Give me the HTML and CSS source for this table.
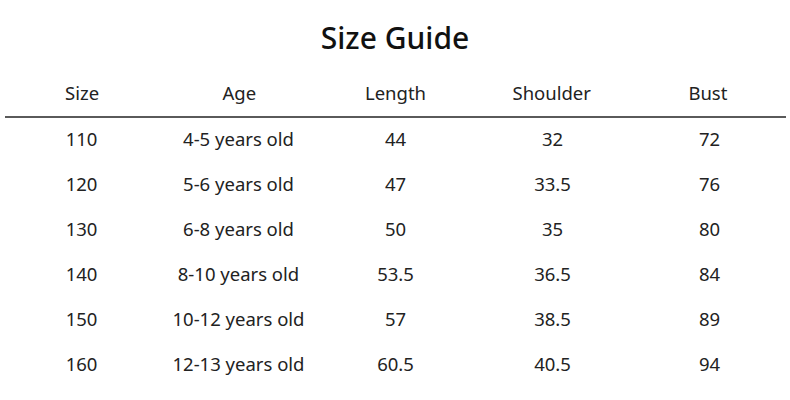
FILE: index.html
```html
<!DOCTYPE html>
<html>
<head>
<meta charset="utf-8">
<link rel="stylesheet" href="styles.css">
</head>
<body>
<div class="page">
  <h1 class="title">Size Guide</h1>
  <div class="table">
    <div class="row head">
      <div>Size</div><div>Age</div><div>Length</div><div>Shoulder</div><div>Bust</div>
    </div>
    <div class="row"><div>110</div><div>4-5 years old</div><div>44</div><div>32</div><div>72</div></div>
    <div class="row"><div>120</div><div>5-6 years old</div><div>47</div><div>33.5</div><div>76</div></div>
    <div class="row"><div>130</div><div>6-8 years old</div><div>50</div><div>35</div><div>80</div></div>
    <div class="row"><div>140</div><div>8-10 years old</div><div>53.5</div><div>36.5</div><div>84</div></div>
    <div class="row"><div>150</div><div>10-12 years old</div><div>57</div><div>38.5</div><div>89</div></div>
    <div class="row"><div>160</div><div>12-13 years old</div><div>60.5</div><div>40.5</div><div>94</div></div>
  </div>
</div>
</body>
</html>
```
FILE: styles.css
```css
html, body {
  margin: 0;
  padding: 0;
  background: #ffffff;
}
.page {
  width: 790px;
  height: 400px;
  font-family: "Noto Sans", "Open Sans", sans-serif;
  color: #1a1a1a;
}
.title {
  margin: 0;
  height: 72px;
  display: flex;
  align-items: center;
  justify-content: center;
  font-size: 30px;
  font-weight: 500;
  color: #111;
  padding-top: 2px;
  box-sizing: border-box;
}
.table {
  margin-left: 3px;
  width: 785px;
}
.row {
  display: grid;
  grid-template-columns: repeat(5, 1fr);
  height: 45px;
  box-sizing: border-box;
  padding-bottom: 4px;
  align-items: center;
  font-size: 18.5px;
  color: #222;
}
.row > div {
  text-align: center;
}
.head {
  height: 46px;
  border-bottom: 2px solid #5a5a5a;
  margin: 0 2px;
}
.head > div:first-child { margin-left: -2px; }
```
